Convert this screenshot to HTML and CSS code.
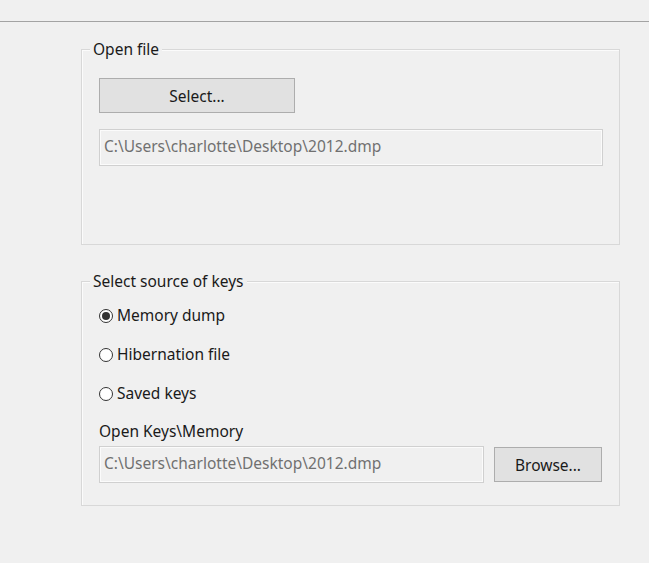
FILE: index.html
```html
<!DOCTYPE html>
<html>
<head>
<meta charset="utf-8">
<link rel="stylesheet" href="styles.css">
</head>
<body>
<div class="topbar"></div>
<div class="content">
  <div class="group group-file">
    <div class="legend">Open file</div>
    <button class="btn btn-select">Select...</button>
    <div class="field field-wide">C:\Users\charlotte\Desktop\2012.dmp</div>
  </div>
  <div class="group group-keys">
    <div class="legend">Select source of keys</div>
    <div class="radio-row"><span class="radio checked"></span><span class="radio-label">Memory dump</span></div>
    <div class="radio-row"><span class="radio"></span><span class="radio-label">Hibernation file</span></div>
    <div class="radio-row"><span class="radio"></span><span class="radio-label">Saved keys</span></div>
    <div class="label">Open Keys\Memory</div>
    <div class="browse-row">
      <div class="field field-path">C:\Users\charlotte\Desktop\2012.dmp</div>
      <button class="btn btn-browse">Browse...</button>
    </div>
  </div>
</div>
</body>
</html>
```
FILE: styles.css
```css
* { box-sizing: border-box; }
html, body {
  margin: 0;
  background: #f0f0f0;
  font-family: "Noto Sans", "Open Sans", sans-serif;
  font-size: 15.5px;
  color: #1a1a1a;
}
.topbar {
  height: 22px;
  border-bottom: 1px solid #a3a3a3;
}
.content {
  padding: 0 29px 0 81px;
}
.group {
  position: relative;
  border: 1px solid #d8d8d8;
  box-shadow: inset 1px 1px 0 #fbfbfb;
  padding: 0 16px 0 17px;
}
.legend {
  position: absolute;
  top: -12px;
  left: 8px;
  padding: 0 3px;
  background: #f0f0f0;
  line-height: 22px;
}
.group-file {
  margin-top: 27px;
  height: 196px;
  padding-top: 28px;
}
.btn {
  display: block;
  font: inherit;
  color: #1a1a1a;
  background: #e1e1e1;
  border: 1px solid #adadad;
  padding: 0;
  margin: 0;
}
.btn-select {
  width: 196px;
  height: 35px;
}
.field {
  height: 37px;
  border: 1px solid #d0d0d0;
  box-shadow: inset 0 0 0 1px #fbfbfb;
  color: #707070;
  padding-left: 4px;
  display: flex;
  align-items: center;
  padding-bottom: 3px;
}
.field-wide {
  margin-top: 16px;
}
.group-keys {
  margin-top: 36px;
  height: 225px;
  padding-top: 14px;
}
.radio-row {
  height: 39px;
  display: flex;
  align-items: center;
}
.radio {
  width: 14px;
  height: 14px;
  border: 1px solid #333;
  border-radius: 50%;
  background: #fff;
  margin-right: 4px;
  position: relative;
  flex: none;
}
.radio.checked::after {
  content: "";
  position: absolute;
  left: 2px;
  top: 2px;
  width: 8px;
  height: 8px;
  border-radius: 50%;
  background: #333;
}
.radio-label {
  line-height: 22px;
  margin-top: -2px;
}
.label {
  line-height: 22px;
  margin-top: 7px;
}
.browse-row {
  display: flex;
  align-items: center;
  margin-top: 4px;
}
.field-path {
  width: 385px;
}
.btn-browse {
  width: 108px;
  height: 35px;
  margin-left: 10px;
}
```
